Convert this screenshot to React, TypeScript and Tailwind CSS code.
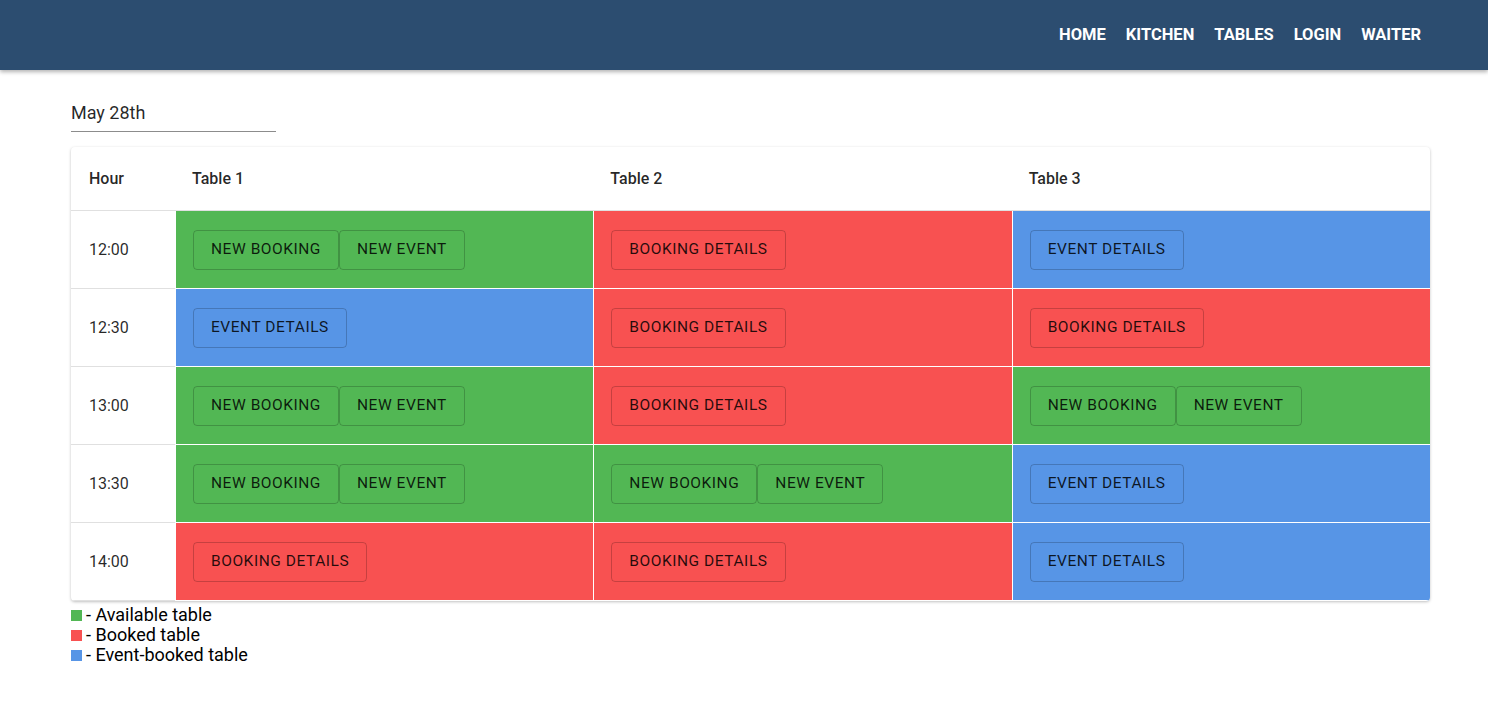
import React from 'react'

type Cell = 'free' | 'booked' | 'event'

const rows: { hour: string; cells: Cell[] }[] = [
  { hour: '12:00', cells: ['free', 'booked', 'event'] },
  { hour: '12:30', cells: ['event', 'booked', 'booked'] },
  { hour: '13:00', cells: ['free', 'booked', 'free'] },
  { hour: '13:30', cells: ['free', 'free', 'event'] },
  { hour: '14:00', cells: ['booked', 'booked', 'event'] },
]

const bg: Record<Cell, string> = {
  free: 'bg-[#52b754]',
  booked: 'bg-[#f85151]',
  event: 'bg-[#5795e6]',
}

function Btn({ children }: { children: React.ReactNode }) {
  return (
    <button className="h-10 px-[17px] rounded border border-black/20 text-[15.5px] tracking-[0.035em] text-black/85 leading-none">
      {children}
    </button>
  )
}

function SlotCell({ kind }: { kind: Cell }) {
  return (
    <div className={`${bg[kind]} border-l border-b border-white flex items-center px-[17px] h-[78px]`}>
      {kind === 'free' && (
        <>
          <Btn>NEW BOOKING</Btn>
          <Btn>NEW EVENT</Btn>
        </>
      )}
      {kind === 'booked' && <Btn>BOOKING DETAILS</Btn>}
      {kind === 'event' && <Btn>EVENT DETAILS</Btn>}
    </div>
  )
}

export default function App() {
  const nav = ['HOME', 'KITCHEN', 'TABLES', 'LOGIN', 'WAITER']
  return (
    <div className="min-h-screen bg-white" style={{ fontFamily: 'Roboto, "Liberation Sans", sans-serif' }}>
      <header className="h-[70px] bg-[#2c4d70] shadow-[0_2px_4px_rgba(0,0,0,0.3)] flex items-center justify-end pr-[57px]">
        <nav className="flex">
          {nav.map(item => (
            <a key={item} className="px-[10px] text-white font-bold text-[16.5px]">
              {item}
            </a>
          ))}
        </nav>
      </header>

      <main className="pl-[71px] pr-[58px]">
        <div className="mt-[29px] w-[205px] border-b border-black/45 pt-[2px] pb-[5px]">
          <span className="text-[18px] text-black/85 leading-[23px]">May 28th</span>
        </div>

        <div className="mt-[15px] rounded bg-white shadow-[0_1px_3px_rgba(0,0,0,0.25)] overflow-hidden">
          <div className="grid grid-cols-[104px_1fr_1fr_1fr]">
            <div className="h-[64px] flex items-center pl-[18px] border-b border-[#e0e0e0] text-[16px] font-medium text-black/85">Hour</div>
            {['Table 1', 'Table 2', 'Table 3'].map(t => (
              <div key={t} className="h-[64px] flex items-center pl-[17px] border-b border-[#e0e0e0] text-[16px] font-medium text-black/85">
                {t}
              </div>
            ))}
            {rows.map(r => (
              <React.Fragment key={r.hour}>
                <div className="h-[78px] flex items-center pl-[18px] border-b border-[#e0e0e0] text-[16px] text-black/85">
                  {r.hour}
                </div>
                {r.cells.map((c, i) => (
                  <SlotCell key={i} kind={c} />
                ))}
              </React.Fragment>
            ))}
          </div>
        </div>

        <div className="mt-[4px] text-[18px] leading-5 text-black">
          <div><span className="inline-block w-[11px] h-[11px] bg-[#52b754] mr-[4px]" />- Available table</div>
          <div><span className="inline-block w-[11px] h-[11px] bg-[#f85151] mr-[4px]" />- Booked table</div>
          <div><span className="inline-block w-[11px] h-[11px] bg-[#5795e6] mr-[4px]" />- Event-booked table</div>
        </div>
      </main>
    </div>
  )
}
